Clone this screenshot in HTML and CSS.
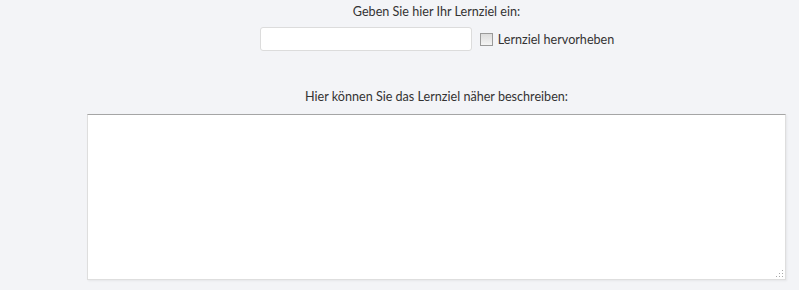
FILE: index.html
```html
<!DOCTYPE html>
<html lang="de">
<head>
    <meta charset="UTF-8">
    <title>Lernziel</title>
    <link rel="stylesheet" href="styles.css">
</head>
<body>
    <div class="goal-form">
        <label class="goal-label" for="goal-title">Geben Sie hier Ihr Lernziel ein:</label>
        <div class="goal-row">
            <input type="text" id="goal-title" class="goal-input">
            <label class="goal-check"><span class="check-box"></span>Lernziel hervorheben</label>
        </div>
        <label class="goal-label desc-label" for="goal-desc">Hier können Sie das Lernziel näher beschreiben:</label>
        <div class="desc-wrap">
            <textarea id="goal-desc" class="goal-desc"></textarea>
            <span class="grip"></span>
        </div>
    </div>
</body>
</html>
```

FILE: styles.css
```css
html, body {
    margin: 0;
    padding: 0;
    background: #f3f4f7;
}
body {
    font-family: Lato, "Open Sans", sans-serif;
    font-size: 12.6px;
    color: #333;
    height: 290px;
    overflow: hidden;
}
.goal-form {
    width: 699px;
    margin-left: 87px;
    padding-top: 3px;
    display: flex;
    flex-direction: column;
    align-items: center;
}
.goal-label {
    display: block;
    line-height: 17px;
}
.goal-row {
    display: flex;
    align-items: center;
    margin-top: 7px;
    margin-left: 1px;
}
.goal-input {
    width: 210px;
    height: 22px;
    padding: 0;
    margin: 0;
    border: 1px solid #dcdcdc;
    border-radius: 3px;
    background: #fff;
}
.goal-check {
    display: flex;
    align-items: center;
    margin-left: 8px;
}
.check-box {
    width: 11px;
    height: 11px;
    border: 1px solid #9a9a9a;
    background: linear-gradient(#dcdcdc, #f4f4f4);
    margin-right: 5px;
}
.desc-label {
    margin-top: 37px;
}
.desc-wrap {
    position: relative;
    width: 699px;
    margin-top: 9px;
}
.goal-desc {
    display: block;
    box-sizing: border-box;
    width: 699px;
    height: 166px;
    margin: 0;
    padding: 0;
    border: 1px solid #dedede;
    border-top-color: #a5a5a5;
    background: #fff;
    resize: none;
    box-shadow: 1px 1px 2px rgba(0, 0, 0, 0.06);
}
.grip {
    position: absolute;
    right: 3px;
    bottom: 3px;
    width: 8px;
    height: 8px;
    background: radial-gradient(circle, #a8a8a8 0.7px, transparent 1px) 0 0 / 3px 3px;
    clip-path: polygon(100% 0, 100% 100%, 0 100%);
}
```
